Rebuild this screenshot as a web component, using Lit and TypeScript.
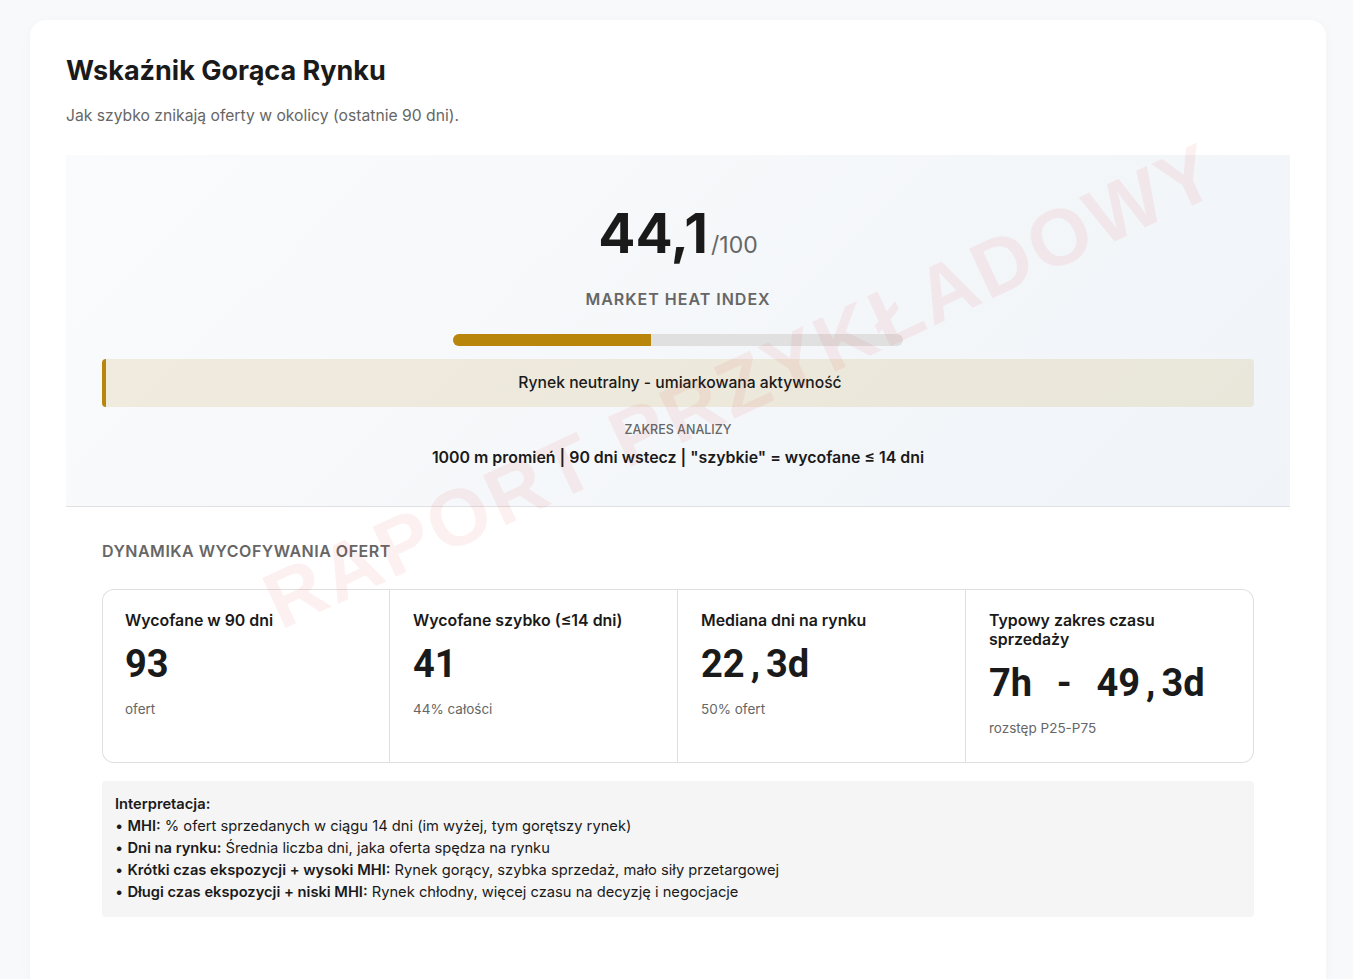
import { LitElement, html, css } from 'lit'
import { customElement } from 'lit/decorators.js'

const stats = [
  { label: 'Wycofane w 90 dni', value: '93', note: 'ofert' },
  { label: 'Wycofane szybko (≤14 dni)', value: '41', note: '44% całości' },
  { label: 'Mediana dni na rynku', value: '22,3d', note: '50% ofert' },
  { label: 'Typowy zakres czasu sprzedaży', value: '7h - 49,3d', note: 'rozstęp P25-P75' },
]

@customElement('app-root')
export class AppRoot extends LitElement {
  static styles = css`
    :host {
      display: block;
      min-height: 979px;
      box-sizing: border-box;
      padding: 20px 27px 0 30px;
      background: #f8f9fa;
      font-family: Inter, 'Liberation Sans', sans-serif;
      color: #1a1a1a;
    }

    .card {
      position: relative;
      overflow: hidden;
      background: #fff;
      border-radius: 16px 16px 0 0;
      padding: 30px 36px 62px;
      box-shadow: 0 2px 12px rgba(0, 0, 0, 0.03);
    }

    h1 {
      margin: 0;
      font-size: 27px;
      line-height: 42px;
      font-weight: 700;
    }

    .subtitle {
      margin: 12px 0 27px;
      font-size: 15.7px;
      line-height: 24px;
      color: #666;
    }

    .hero {
      padding: 36px 36px 36px;
      text-align: center;
      background: linear-gradient(135deg, #fafbfc 0%, #f0f4f8 100%);
      border-bottom: 1px solid #e0e0e0;
    }

    .score {
      font-size: 55px;
      line-height: 84px;
      font-weight: 700;
    }

    .score span {
      margin-left: 3px;
      font-size: 23px;
      font-weight: 400;
      color: #666;
    }

    .index {
      font-size: 16px;
      line-height: 24px;
      font-weight: 600;
      letter-spacing: 1px;
      color: #666;
    }

    .track {
      width: 450px;
      height: 12px;
      margin: 23px auto 13px;
      border-radius: 6px;
      overflow: hidden;
      background: #e0e0e0;
    }

    .fill {
      height: 100%;
      background: #b8860b;
    }

    .banner {
      padding: 12px;
      border-left: 4px solid #b8860b;
      border-radius: 4px;
      background: rgba(184, 134, 11, 0.12);
      font-size: 15.7px;
      line-height: 24px;
      font-weight: 500;
    }

    .scope-label {
      margin-top: 14px;
      font-size: 12.5px;
      line-height: 18px;
      font-weight: 500;
      color: #666;
    }

    .scope {
      margin-top: 7px;
      font-size: 15.9px;
      line-height: 24px;
      font-weight: 600;
    }

    .dynamics {
      padding: 35px 36px 0;
    }

    h2 {
      margin: 0 0 29px;
      font-size: 16px;
      line-height: 18px;
      font-weight: 600;
      letter-spacing: 0.5px;
      color: #666;
    }

    .grid {
      display: grid;
      grid-template-columns: repeat(4, 1fr);
      border-radius: 12px;
      box-shadow: inset 0 0 0 1px #e0e0e0;
    }

    .stat {
      padding: 22px 22px 24px 23px;
      border-right: 1px solid #e0e0e0;
    }

    .stat:last-child {
      border-right: 0;
    }

    .stat-label {
      font-size: 15.9px;
      line-height: 19.2px;
      font-weight: 600;
    }

    .stat-value {
      display: flex;
      margin-top: 11px;
      font-family: Roboto, sans-serif;
      font-size: 38px;
      line-height: 47px;
      font-weight: 700;
      white-space: pre;
    }

    .stat-value span {
      flex: 0 0 21.4px;
      text-align: center;
    }

    .stat-note {
      margin-top: 11px;
      font-size: 13.5px;
      line-height: 21px;
      color: #666;
    }

    .notes {
      margin-top: 18px;
      padding: 12px 13px 14px;
      border-radius: 4px;
      background: #f5f5f5;
      font-size: 14.7px;
      line-height: 22px;
    }

    b {
      font-weight: 600;
    }

    .watermark {
      position: absolute;
      left: 711px;
      top: 366px;
      transform: translate(-50%, -50%) rotate(-25deg);
      font-family: 'Liberation Sans', sans-serif;
      font-size: 80px;
      font-weight: 700;
      white-space: nowrap;
      letter-spacing: 3px;
      color: rgba(220, 38, 48, 0.07);
      pointer-events: none;
    }
  `

  render() {
    return html`
      <div class="card">
        <h1>Wskaźnik Gorąca Rynku</h1>
        <p class="subtitle">Jak szybko znikają oferty w okolicy (ostatnie 90 dni).</p>
        <section class="hero">
          <div class="score">44,1<span>/100</span></div>
          <div class="index">MARKET HEAT INDEX</div>
          <div class="track"><div class="fill" style="width: 44%"></div></div>
          <div class="banner">Rynek neutralny - umiarkowana aktywność</div>
          <div class="scope-label">ZAKRES ANALIZY</div>
          <div class="scope">1000 m promień | 90 dni wstecz | "szybkie" = wycofane ≤ 14 dni</div>
        </section>
        <section class="dynamics">
          <h2>DYNAMIKA WYCOFYWANIA OFERT</h2>
          <div class="grid">
            ${stats.map(
              (s) => html`
                <div class="stat">
                  <div class="stat-label">${s.label}</div>
                  <div class="stat-value">${[...s.value].map((c) => html`<span>${c}</span>`)}</div>
                  <div class="stat-note">${s.note}</div>
                </div>
              `
            )}
          </div>
          <div class="notes">
            <b>Interpretacja:</b><br />
            • <b>MHI:</b> % ofert sprzedanych w ciągu 14 dni (im wyżej, tym gorętszy rynek)<br />
            • <b>Dni na rynku:</b> Średnia liczba dni, jaka oferta spędza na rynku<br />
            • <b>Krótki czas ekspozycji + wysoki MHI:</b> Rynek gorący, szybka sprzedaż, mało siły przetargowej<br />
            • <b>Długi czas ekspozycji + niski MHI:</b> Rynek chłodny, więcej czasu na decyzję i negocjacje
          </div>
        </section>
        <div class="watermark">RAPORT PRZYKŁADOWY</div>
      </div>
    `
  }
}
